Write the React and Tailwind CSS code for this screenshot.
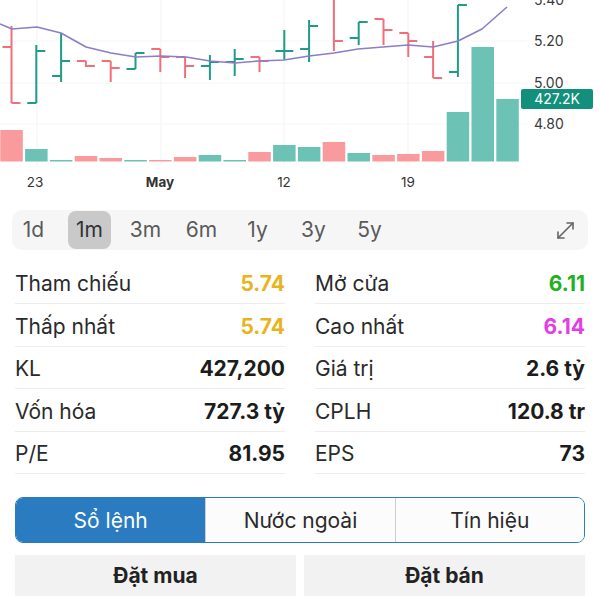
import React, { useState } from 'react';

const GREEN = '#1f9c87';
const RED = '#f26f78';
const VOL_GREEN = '#6cc2b4';
const VOL_RED = '#f99a9d';

// candle: [open, high, low, close, up] in chart pixels
const candles = [
  [47, 26, 103, 103, false],
  [103, 45, 103, 51, true],
  [76, 33, 82, 61, true],
  [61, 61, 67, 66, false],
  [61, 61, 82, 68, false],
  [69, 53, 69, 53, true],
  [49, 49, 72, 57, false],
  [57, 57, 78, 66, false],
  [66, 55, 80, 62, true],
  [62, 49, 76, 59, true],
  [57, 57, 72, 61, false],
  [51, 30, 60, 51, true],
  [49, 20, 62, 26, true],
  [-10, -20, 51, 41, false],
  [38, 22, 45, 22, true],
  [19, 19, 45, 30, false],
  [33, 33, 57, 41, false],
  [57, 41, 78, 78, false],
  [72, 5, 77, 5, true],
  [-20, -60, -5, -50, true],
  [-50, -80, -30, -70, true],
];

// volume: [top, up]
const volumes = [
  [130, false], [149, true], [160, true], [156, false], [158, false],
  [160, true], [160, false], [157, false], [155, true], [160, true],
  [152, false], [145, true], [147, true], [142, false], [153, true],
  [155, false], [154, false], [151, false], [112, true], [47, true], [99, true],
];

const maPoints = "0,24 12,29 37,27 61,33 86,47 111,53 136,57 161,56 186,57 210,61 235,63 259,61 284,60 309,56 334,53 358,49 383,47 408,45 433,47 458,41 482,29 507,7";

const BASE = 161.5;
const barX = (i) => 0.3 + 24.8 * i;

const PriceChart = () => (
  <svg width="600" height="200" viewBox="0 0 600 200" className="block">
    {/* grid */}
    {[37, 161, 284, 408].map((x) => (
      <line key={x} x1={x} y1="0" x2={x} y2="165" stroke="#f3f3f3" strokeWidth="1" />
    ))}
    {[41, 83, 124].map((y) => (
      <line key={y} x1="0" y1={y} x2="527" y2={y} stroke="#f5f5f5" strokeWidth="1" />
    ))}

    {/* volume */}
    {volumes.map(([top, up], i) => (
      <rect key={i} x={barX(i)} y={top} width="22.5" height={BASE - top} fill={up ? VOL_GREEN : VOL_RED} />
    ))}

    {/* ohlc bars */}
    {candles.map(([o, h, l, c, up], i) => {
      const cx = barX(i) + 11.2;
      const col = up ? GREEN : RED;
      return (
        <g key={i} stroke={col} strokeWidth="2" fill="none">
          <line x1={cx} y1={h} x2={cx} y2={l} />
          <line x1={cx - 9} y1={o} x2={cx} y2={o} />
          <line x1={cx} y1={c} x2={cx + 9} y2={c} />
        </g>
      );
    })}

    {/* moving average */}
    <polyline points={maPoints} fill="none" stroke="#8a7ec9" strokeWidth="1.6" strokeLinejoin="round" />

    {/* price axis */}
    <g fontFamily="Inter, sans-serif" fontSize="14" fill="#3a3a3a">
      <text x="534" y="5">5.40</text>
      <text x="534" y="46">5.20</text>
      <text x="534" y="88">5.00</text>
      <text x="534" y="129">4.80</text>
    </g>
    <rect x="521" y="89" width="72" height="20" rx="2" fill="#13907c" />
    <text x="557" y="104" textAnchor="middle" fontFamily="Inter, sans-serif" fontSize="14" fill="#ffffff">427.2K</text>

    {/* date axis */}
    <g fontFamily="Inter, sans-serif" fontSize="13.5" fill="#333" textAnchor="middle">
      <text x="35" y="187">23</text>
      <text x="160" y="187" fontWeight="700">May</text>
      <text x="284" y="187">12</text>
      <text x="408" y="187">19</text>
    </g>
  </svg>
);

const ranges = ["1d", "1m", "3m", "6m", "1y", "3y", "5y"];

const leftStats = [
  { label: "Tham chiếu", value: "5.74", color: "text-[#e8b41e]" },
  { label: "Thấp nhất", value: "5.74", color: "text-[#e8b41e]" },
  { label: "KL", value: "427,200", color: "text-[#1c1c1c]" },
  { label: "Vốn hóa", value: "727.3 tỷ", color: "text-[#1c1c1c]" },
  { label: "P/E", value: "81.95", color: "text-[#1c1c1c]" },
];

const rightStats = [
  { label: "Mở cửa", value: "6.11", color: "text-[#20b020]" },
  { label: "Cao nhất", value: "6.14", color: "text-[#e33de6]" },
  { label: "Giá trị", value: "2.6 tỷ", color: "text-[#1c1c1c]" },
  { label: "CPLH", value: "120.8 tr", color: "text-[#1c1c1c]" },
  { label: "EPS", value: "73", color: "text-[#1c1c1c]" },
];

const tabs = ["Sổ lệnh", "Nước ngoài", "Tín hiệu"];

const StatCell = ({ label, value, color }) => (
  <div className="flex items-center justify-between h-[42.5px] pt-[3px] border-b border-[#ededed]">
    <span className="text-[21px] text-[#2a2a2a]">{label}</span>
    <span className={`text-[21px] font-bold ${color}`}>{value}</span>
  </div>
);

const App = () => {
  const [range, setRange] = useState("1m");
  const [tab, setTab] = useState(0);

  return (
    <div className="w-[600px] h-[600px] overflow-hidden bg-white font-['Inter',sans-serif]">
      <PriceChart />

      {/* RANGE PICKER */}
      <div className="mt-[10px] mx-[12px] h-[40px] rounded-[10px] bg-[#f6f6f6] flex items-center justify-between pr-[13px]">
        <div className="flex items-center gap-[13px]">
          {ranges.map((r) => (
            <button
              key={r}
              onClick={() => setRange(r)}
              className={`w-[43px] h-[38px] rounded-[8px] text-[21px] ${range === r ? "bg-[#c9c9c9] text-[#333]" : "text-[#5a5a5a]"}`}
            >
              {r}
            </button>
          ))}
        </div>
        <svg width="19" height="19" viewBox="0 0 19 19" fill="none" stroke="#666" strokeWidth="1.6" strokeLinecap="round" strokeLinejoin="round">
          <path d="M2 17 17 2" />
          <path d="M2 11v6h6" />
          <path d="M11 2h6v6" />
        </svg>
      </div>

      {/* STATS */}
      <div className="mt-[11.5px] px-[15px] grid grid-cols-2 gap-x-[30px]">
        <div>
          {leftStats.map((s) => <StatCell key={s.label} {...s} />)}
        </div>
        <div>
          {rightStats.map((s) => <StatCell key={s.label} {...s} />)}
        </div>
      </div>

      {/* TABS */}
      <div className="mt-[23px] mx-[15px] h-[46px] rounded-[8px] border border-[#2a7bbf] overflow-hidden grid grid-cols-3">
        {tabs.map((t, i) => (
          <button
            key={t}
            onClick={() => setTab(i)}
            className={`pt-[2px] text-[21px] ${i > 0 ? "border-l border-[#cfcfcf]" : ""} ${tab === i ? "bg-[#2a7bbf] text-white" : "bg-[#fcfcfc] text-[#2a2a2a]"}`}
          >
            {t}
          </button>
        ))}
      </div>

      {/* ORDER BUTTONS */}
      <div className="mt-[12px] mx-[15px] grid grid-cols-2 gap-[8px]">
        <button className="h-[41px] bg-[#f2f2f2] text-[21px] font-bold text-[#222]">Đặt mua</button>
        <button className="h-[41px] bg-[#f2f2f2] text-[21px] font-bold text-[#222]">Đặt bán</button>
      </div>
    </div>
  );
};

export default App;
